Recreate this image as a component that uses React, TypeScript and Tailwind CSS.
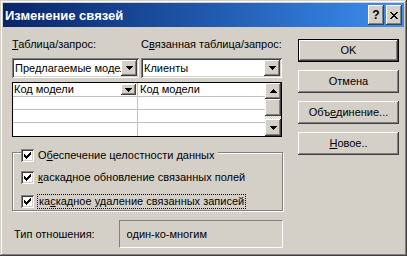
const raised =
  'bg-[#d4d0c8] shadow-[inset_-1px_-1px_#404040,inset_1px_1px_#ffffff,inset_-2px_-2px_#808080,inset_2px_2px_#d4d0c8]';
const sunken =
  'shadow-[inset_1px_1px_#808080,inset_-1px_-1px_#ffffff,inset_2px_2px_#404040,inset_-2px_-2px_#d4d0c8]';

const ArrowDown = () => (
  <svg width="7" height="4" viewBox="0 0 7 4" shapeRendering="crispEdges">
    <path d="M0 0h7v1H0zM1 1h5v1H1zM2 2h3v1H2zM3 3h1v1H3z" fill="#000" />
  </svg>
);

const ArrowUp = () => (
  <svg width="7" height="4" viewBox="0 0 7 4" shapeRendering="crispEdges">
    <path d="M3 0h1v1H3zM2 1h3v1H2zM1 2h5v1H1zM0 3h7v1H0z" fill="#000" />
  </svg>
);

const Combo = ({ text, width }: { text: string; width: string }) => (
  <div className={`${width} h-[20px] bg-white ${sunken} flex items-center p-[2px]`}>
    <span className="flex-1 pl-[1px] whitespace-nowrap overflow-hidden">{text}</span>
    <div className={`w-[16px] h-[16px] ${raised} flex items-center justify-center`}>
      <ArrowDown />
    </div>
  </div>
);

const Check = () => (
  <div className={`w-[13px] h-[13px] bg-white ${sunken} flex items-center justify-center shrink-0`}>
    <svg width="7" height="7" viewBox="0 0 7 7" shapeRendering="crispEdges">
      <path
        d="M6 0h1v1H6zM5 1h2v1H5zM0 2h1v1H0zM4 2h3v1H4zM0 3h2v1H0zM3 3h3v1H3zM0 4h5v1H0zM1 5h3v1H1zM2 6h1v1H2z"
        fill="#000"
      />
    </svg>
  </div>
);

const Btn = ({ children, def }: { children: React.ReactNode; def?: boolean }) => (
  <div className={def ? 'border border-black' : ''}>
    <div
      className={`${raised} ${def ? 'h-[21px]' : 'h-[23px]'} flex items-center justify-center`}
    >
      {children}
    </div>
  </div>
);

export default function App() {
  return (
    <div
      className="w-[407px] h-[256px] bg-[#d4d0c8] p-[3px] text-[11px] leading-[13px] text-black shadow-[inset_-1px_-1px_#404040,inset_1px_1px_#d4d0c8,inset_-2px_-2px_#808080,inset_2px_2px_#ffffff]"
      style={{ fontFamily: '"Liberation Sans", Arial, sans-serif' }}
    >
      {/* title bar */}
      <div className="h-[24px] flex items-center bg-gradient-to-r from-[#0a246a] to-[#3c90f2] pl-[2px] pr-[2px]">
        <span className="flex-1 text-white font-bold text-[13px]">Изменение связей</span>
        <div className={`w-[16px] h-[20px] ${raised} flex items-center justify-center font-bold text-[12px]`}>
          ?
        </div>
        <div className={`ml-[2px] w-[16px] h-[20px] ${raised} flex items-center justify-center`}>
          <svg width="8" height="7" viewBox="0 0 8 7" shapeRendering="crispEdges">
            <path
              d="M0 0h2v1H0zM6 0h2v1H6zM1 1h2v1H1zM5 1h2v1H5zM2 2h4v1H2zM3 3h2v1H3zM2 4h4v1H2zM1 5h2v1H1zM5 5h2v1H5zM0 6h2v1H0zM6 6h2v1H6z"
              fill="#000"
            />
          </svg>
        </div>
      </div>

      <div className="flex pl-[9px]">
        {/* left column */}
        <div className="w-[271px] pt-[11px]">
          <div className="flex h-[13px]">
            <span className="w-[129px]">
              <u>Т</u>аблица/запрос:
            </span>
            <span>
              С<u>в</u>язанная таблица/запрос:
            </span>
          </div>

          <div className="flex gap-[2px] mt-[7px]">
            <Combo text="Предлагаемые модели" width="w-[127px]" />
            <Combo text="Клиенты" width="w-[141px]" />
          </div>

          {/* grid */}
          <div className="mt-[4px] w-[270px] h-[55px] bg-white border border-black flex">
            <div className="flex-1 flex flex-col">
              <div className="h-[14px] flex border-b border-[#c0c0c0]">
                <div className="w-[125px] flex items-center pl-[1px] pr-[1px] border-r border-[#c0c0c0]">
                  <span className="flex-1">Код модели</span>
                  <div className={`w-[15px] h-[11px] ${raised} flex items-center justify-center`}>
                    <ArrowDown />
                  </div>
                </div>
                <div className="flex-1 pl-[2px] flex items-center">Код модели</div>
              </div>
              <div className="h-[13px] flex border-b border-[#c0c0c0]">
                <div className="w-[125px] border-r border-[#c0c0c0]" />
              </div>
              <div className="h-[13px] flex border-b border-[#c0c0c0]">
                <div className="w-[125px] border-r border-[#c0c0c0]" />
              </div>
              <div className="flex-1 flex">
                <div className="w-[125px] border-r border-[#c0c0c0]" />
              </div>
            </div>
            <div className="w-[16px] flex flex-col">
              <div className={`h-[16px] ${raised} flex items-center justify-center`}>
                <ArrowUp />
              </div>
              <div className={`h-[17px] ${raised}`} />
              <div className="h-[3px] bg-[repeating-conic-gradient(#ffffff_0_25%,#d4d0c8_0_50%)] bg-[length:2px_2px]" />
              <div className={`flex-1 ${raised} flex items-center justify-center`}>
                <ArrowDown />
              </div>
            </div>
          </div>

          {/* group box */}
          <div className="mt-[15px] w-[271px] h-[59px] border border-[#808080] shadow-[inset_1px_1px_#ffffff,1px_1px_#ffffff] pl-[8px]">
            <div className="-mt-[4px] flex w-fit items-center bg-[#d4d0c8] pr-[4px]">
              <Check />
              <span className="ml-[4px]">
                О<u>б</u>еспечение целостности данных
              </span>
            </div>
            <div className="mt-[9px] flex items-center">
              <Check />
              <span className="ml-[4px]">
                <u>к</u>аскадное обновление связанных полей
              </span>
            </div>
            <div className="mt-[10px] flex items-center">
              <Check />
              <span className="ml-[3px] border border-dotted border-black px-[1px]">
                ка<u>с</u>кадное удаление связанных записей
              </span>
            </div>
          </div>

          {/* relation type */}
          <div className="mt-[9px] flex items-center">
            <span className="w-[107px] pl-[2px]">Тип отношения:</span>
            <div className="w-[165px] h-[28px] flex items-center pl-[7px] border border-t-[#808080] border-l-[#808080] border-b-white border-r-white">
              один-ко-многим
            </div>
          </div>
        </div>

        {/* right column */}
        <div className="ml-[15px] w-[101px] pt-[12px] flex flex-col gap-[8px]">
          <Btn def>OK</Btn>
          <Btn>Отмена</Btn>
          <Btn>
            <span>
              Объ<u>е</u>динение...
            </span>
          </Btn>
          <Btn>
            <span>
              <u>Н</u>овое..
            </span>
          </Btn>
        </div>
      </div>
    </div>
  );
}
